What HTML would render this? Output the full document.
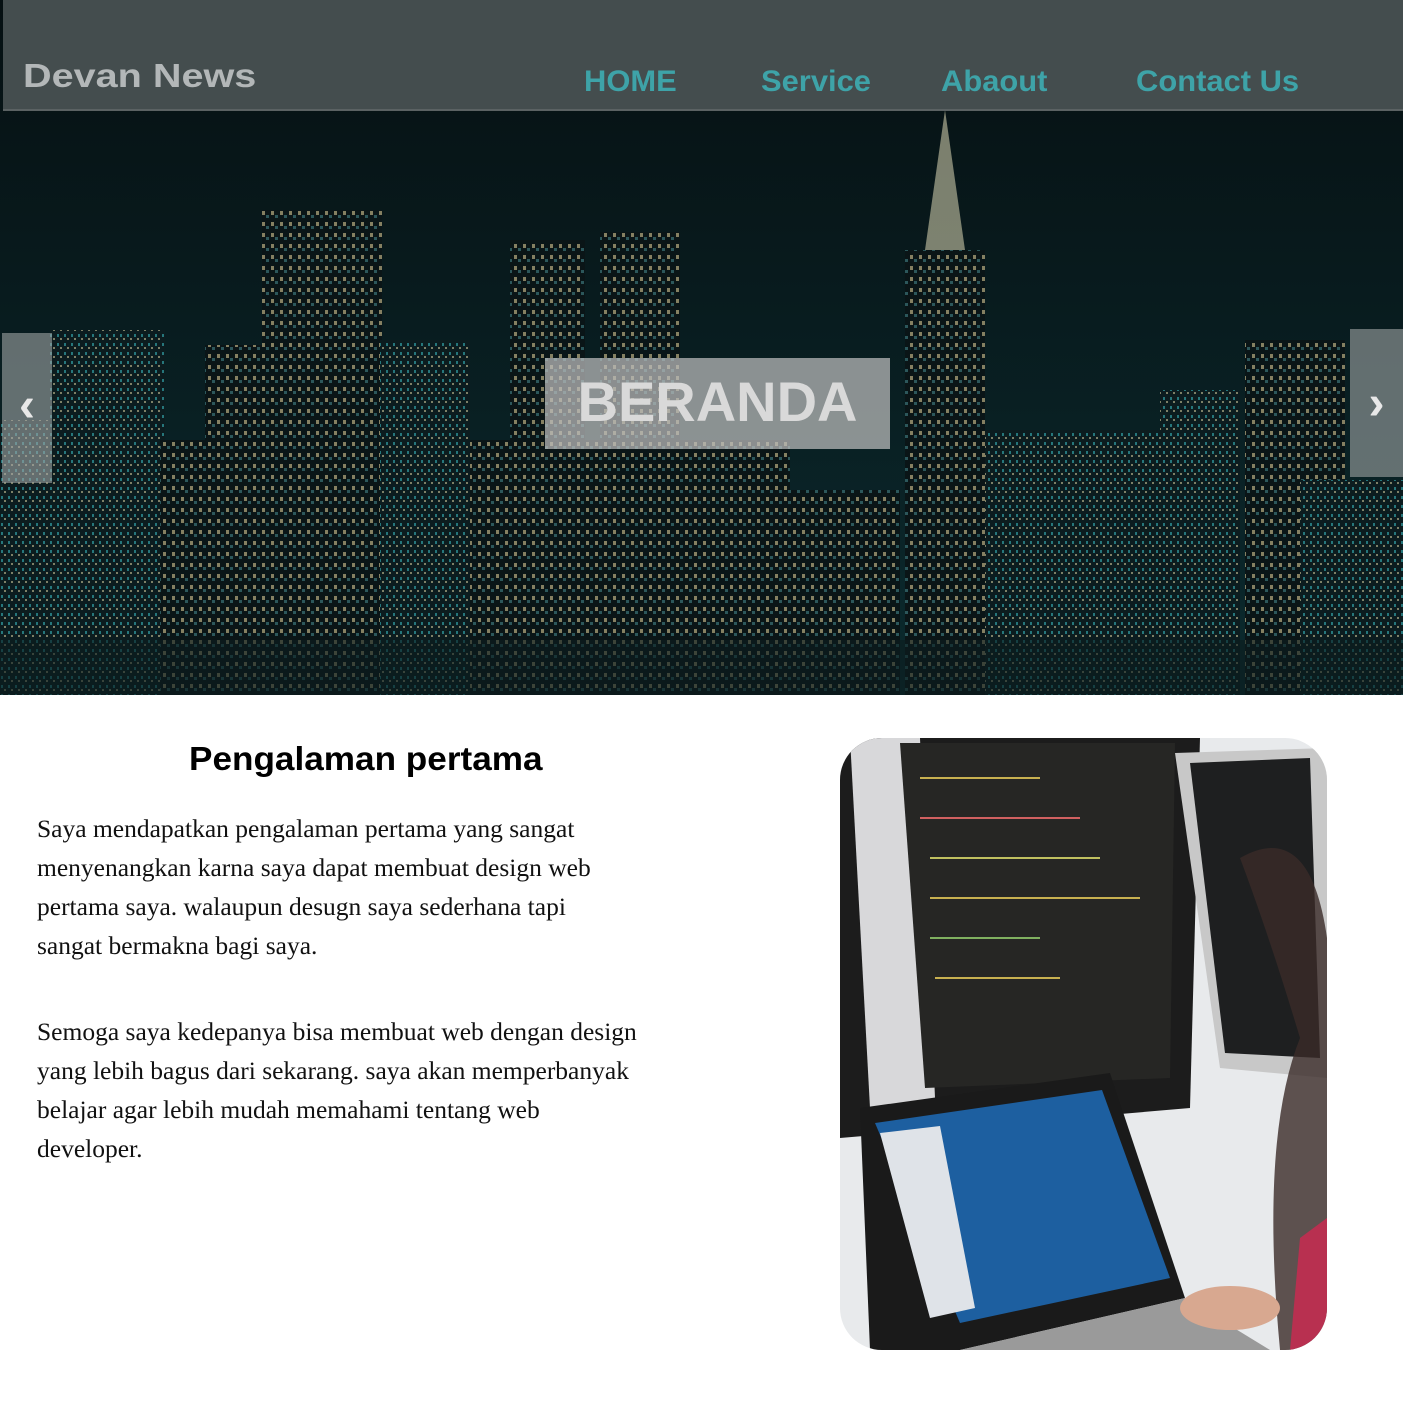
<!DOCTYPE html>
<html><head><meta charset="utf-8"><style>
*{margin:0;padding:0;box-sizing:border-box}
body{width:1403px;height:1403px;background:#fff;position:relative;overflow:hidden;font-family:"Liberation Sans",sans-serif}
.hero{position:absolute;left:0;top:0;width:1403px;height:695px;background:#071416;overflow:hidden}
.nav{position:absolute;left:3px;top:0;width:1400px;height:111px;background:rgba(70,80,81,.97);border-bottom:2px solid #5b6263}
.nav span{position:absolute;font-weight:bold;font-size:30px;white-space:nowrap;transform-origin:left}
.logo{left:20px;top:57px;color:#b3b7b8;font-size:33px!important;transform:scaleX(1.2)}
.l{top:65px;color:#3ea3a8;transform:scaleX(1.03)}
.beranda{position:absolute;left:545px;top:358px;width:345px;height:91px;background:rgba(190,190,190,.72);color:#d9d9d9;font-weight:bold;font-size:56px;text-align:center;line-height:88px}
.arr{position:absolute;background:rgba(160,165,165,.6);color:#e8e8e8;font-size:48px;font-weight:bold;text-align:center}
h2{position:absolute;left:189px;top:740px;font-size:33px;font-weight:bold;color:#000;transform:scaleX(1.065);transform-origin:left}
.p{position:absolute;left:37px;width:720px;font-family:"Liberation Serif",serif;font-size:25.5px;line-height:39px;color:#111}
.img{position:absolute;left:840px;top:738px;width:487px;height:612px;border-radius:42px;overflow:hidden}
</style></head><body>
<div class="hero">
<svg width="1403" height="695" style="position:absolute;left:0;top:0">
<defs>
<linearGradient id="sky" x1="0" y1="0" x2="0" y2="1"><stop offset="0" stop-color="#061012"/><stop offset="1" stop-color="#0b2a2e"/></linearGradient>
<pattern id="win" width="9" height="11" patternUnits="userSpaceOnUse"><rect width="9" height="11" fill="#0a1517"/><rect x="1" y="2" width="3" height="4" fill="#e9d9a0" opacity=".55"/><rect x="5" y="6" width="3" height="3" fill="#5fb8c0" opacity=".4"/></pattern>
<pattern id="win2" width="7" height="9" patternUnits="userSpaceOnUse"><rect width="7" height="9" fill="#0c1c1f"/><rect x="1" y="1" width="2" height="3" fill="#3fd0d8" opacity=".5"/><rect x="4" y="5" width="2" height="2" fill="#f0e4b0" opacity=".5"/></pattern>
</defs>
<rect width="1403" height="695" fill="url(#sky)"/>
<rect x="50" y="330" width="115" height="365" fill="url(#win2)"/>
<rect x="0" y="420" width="60" height="275" fill="url(#win2)"/>
<rect x="160" y="440" width="60" height="255" fill="url(#win)"/>
<rect x="205" y="345" width="60" height="350" fill="url(#win)"/>
<rect x="262" y="210" width="120" height="485" fill="url(#win)"/>
<rect x="380" y="340" width="90" height="355" fill="url(#win2)"/>
<rect x="510" y="240" width="75" height="455" fill="url(#win)"/>
<rect x="600" y="232" width="80" height="463" fill="url(#win)"/>
<rect x="470" y="440" width="320" height="255" fill="url(#win)"/>
<rect x="905" y="250" width="80" height="445" fill="url(#win)"/>
<polygon points="925,250 945,110 965,250" fill="#ccc8a8" opacity=".6"/>
<rect x="780" y="490" width="120" height="205" fill="url(#win)"/>
<rect x="985" y="430" width="180" height="265" fill="url(#win2)"/>
<rect x="1160" y="390" width="80" height="305" fill="url(#win2)"/>
<rect x="1245" y="340" width="100" height="355" fill="url(#win)"/>
<rect x="1300" y="480" width="103" height="215" fill="url(#win2)"/>
<rect x="0" y="640" width="1403" height="55" fill="#0b1c1e" opacity=".6"/>
</svg>
<div class="nav">
<span class="logo">Devan News</span>
<span class="l" style="left:581px">HOME</span>
<span class="l" style="left:758px">Service</span>
<span class="l" style="left:938px">Abaout</span>
<span class="l" style="left:1133px">Contact Us</span>
</div>
<div class="beranda">BERANDA</div>
<div class="arr" style="left:2px;top:333px;width:50px;height:150px;line-height:145px">&lsaquo;</div>
<div class="arr" style="left:1350px;top:329px;width:53px;height:148px;line-height:150px">&rsaquo;</div>
</div>
<h2>Pengalaman pertama</h2>
<div class="p" style="top:809px">Saya mendapatkan pengalaman pertama yang sangat<br>menyenangkan karna saya dapat membuat design web<br>pertama saya. walaupun desugn saya sederhana tapi<br>sangat bermakna bagi saya.</div>
<div class="p" style="top:1012px">Semoga saya kedepanya bisa membuat web dengan design<br>yang lebih bagus dari sekarang. saya akan memperbanyak<br>belajar agar lebih mudah memahami tentang web<br>developer.</div>
<div class="img">
<svg width="487" height="612">
<rect width="487" height="612" fill="#e8eaec"/>
<polygon points="0,0 360,0 350,370 0,400" fill="#1c1c1c"/>
<polygon points="10,0 80,0 95,360 30,370" fill="#d8d8da"/>
<polygon points="60,5 335,5 330,340 85,350" fill="#262624"/>
<g stroke-width="2">
<line x1="80" y1="40" x2="200" y2="40" stroke="#c8b050"/><line x1="80" y1="80" x2="240" y2="80" stroke="#d06060"/>
<line x1="90" y1="120" x2="260" y2="120" stroke="#c0c060"/><line x1="90" y1="160" x2="300" y2="160" stroke="#c8b050"/>
<line x1="90" y1="200" x2="200" y2="200" stroke="#80b060"/><line x1="95" y1="240" x2="220" y2="240" stroke="#c8b050"/>
</g>
<polygon points="335,15 487,10 487,340 380,330" fill="#c8c8c8"/>
<polygon points="350,25 470,20 480,320 385,315" fill="#1e1f20"/>
<polygon points="20,370 270,335 345,560 120,612 30,612" fill="#1a1a1a"/>
<polygon points="35,385 262,352 330,540 120,585" fill="#1d5fa0"/>
<polygon points="40,395 100,388 135,570 90,580" fill="#dfe3e8"/>
<polygon points="120,612 345,560 430,612" fill="#9a9a9a"/>
<path d="M400,120 Q470,80 487,200 L487,612 L440,612 Q420,400 460,300 Q430,200 400,120Z" fill="#3a2a28" opacity=".8"/>
<path d="M460,500 L487,480 L487,612 L450,612Z" fill="#b83050"/>
<ellipse cx="390" cy="570" rx="50" ry="22" fill="#d8a890"/>
</svg>
</div>
</body></html>
